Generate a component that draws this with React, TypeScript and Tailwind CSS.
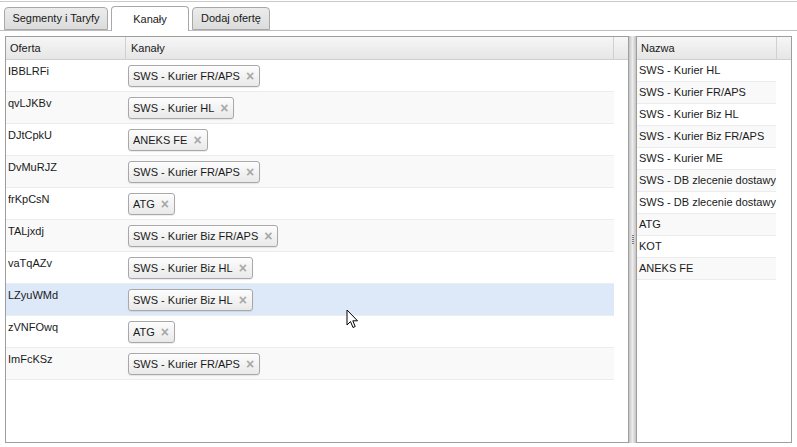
import React from 'react'

const offers = [
  { name: 'IBBLRFi', tag: 'SWS - Kurier FR/APS' },
  { name: 'qvLJKBv', tag: 'SWS - Kurier HL' },
  { name: 'DJtCpkU', tag: 'ANEKS FE' },
  { name: 'DvMuRJZ', tag: 'SWS - Kurier FR/APS' },
  { name: 'frKpCsN', tag: 'ATG' },
  { name: 'TALjxdj', tag: 'SWS - Kurier Biz FR/APS' },
  { name: 'vaTqAZv', tag: 'SWS - Kurier Biz HL' },
  { name: 'LZyuWMd', tag: 'SWS - Kurier Biz HL' },
  { name: 'zVNFOwq', tag: 'ATG' },
  { name: 'ImFcKSz', tag: 'SWS - Kurier FR/APS' },
]

const channels = [
  'SWS - Kurier HL',
  'SWS - Kurier FR/APS',
  'SWS - Kurier Biz HL',
  'SWS - Kurier Biz FR/APS',
  'SWS - Kurier ME',
  'SWS - DB zlecenie dostawy',
  'SWS - DB zlecenie dostawy',
  'ATG',
  'KOT',
  'ANEKS FE',
]

function Tab({ label, active, width }: { label: string; active?: boolean; width: string }) {
  return (
    <div
      className={
        'flex items-center justify-center rounded-t-[4px] border border-[#a8a8a8] ' +
        width +
        (active
          ? ' h-[25px] -mb-px border-b-0 bg-white'
          : ' h-[23px] bg-gradient-to-b from-[#ececec] to-[#dcdcdc]')
      }
    >
      {label}
    </div>
  )
}

function Tag({ label }: { label: string }) {
  return (
    <div className="mt-[5px] inline-flex h-[22px] items-center gap-[6px] rounded-[3px] border border-[#a8a8a8] bg-gradient-to-b from-[#fdfdfd] to-[#e9e9e9] pl-[4px] pr-[5px] shadow-[0_1px_1px_rgba(0,0,0,0.08)]">
      <span>{label}</span>
      <span className="text-[14px] font-bold leading-none text-[#a8a8a8]">×</span>
    </div>
  )
}

export default function App() {
  return (
    <div className="relative h-[447px] w-[797px] overflow-hidden bg-white font-['Liberation_Sans',Arial,sans-serif] text-[11px] text-[#1a1a1a]">
      {/* top line */}
      <div className="mt-px h-px bg-[#c9c9c9]" />

      {/* tabs */}
      <div className="flex h-[29px] items-end gap-[3px] border-b border-[#bdbdbd] pl-[4px]">
        <Tab label="Segmenty i Taryfy" width="w-[104px]" />
        <Tab label="Kanały" width="w-[78px]" active />
        <Tab label="Dodaj ofertę" width="w-[78px]" />
      </div>

      {/* content */}
      <div className="flex h-[412px] pl-[5px] pt-[5px]">
        {/* left grid */}
        <div className="flex w-[624px] flex-col border border-[#9e9e9e]">
          <div className="flex h-[23px] border-b border-[#d0d0d0] bg-gradient-to-b from-[#f6f6f6] to-[#e6e6e6]">
            <div className="flex w-[120px] items-center border-r border-[#d0d0d0] pl-[4px]">Oferta</div>
            <div className="flex flex-1 items-center border-r border-[#d0d0d0] pl-[5px]">Kanały</div>
            <div className="w-[14px]" />
          </div>
          <div className="flex flex-col">
            {offers.map((o, i) => (
              <div
                key={i}
                className={
                  'flex h-[32px] w-[608px] border-b border-[#ececec] ' +
                  (i === 7 ? 'bg-[#dde9f9]' : i % 2 === 1 ? 'bg-[#f9f9f9]' : 'bg-white')
                }
              >
                <div className="w-[120px] pl-[2px] pt-[3px]">{o.name}</div>
                <div className="flex-1 pl-[2px]">
                  <Tag label={o.tag} />
                </div>
              </div>
            ))}
          </div>
        </div>

        {/* splitter */}
        <div className="flex w-[7px] items-center justify-center bg-gradient-to-r from-[#c4c4c4] via-[#ececec] to-[#c4c4c4]">
          <div className="flex flex-col gap-[1px]">
            {[0, 1, 2, 3, 4].map((d) => (
              <div key={d} className="h-[1px] w-[2px] bg-[#7a7a7a]" />
            ))}
          </div>
        </div>

        {/* right grid */}
        <div className="flex w-[156px] flex-col border border-[#9e9e9e]">
          <div className="flex h-[23px] border-b border-[#d0d0d0] bg-gradient-to-b from-[#f6f6f6] to-[#e6e6e6]">
            <div className="flex flex-1 items-center border-r border-[#d0d0d0] pl-[4px]">Nazwa</div>
            <div className="w-[14px]" />
          </div>
          {channels.map((c, i) => (
            <div
              key={i}
              className={
                'flex h-[22px] w-[139px] items-center overflow-hidden whitespace-nowrap border-b border-[#ececec] pl-[2px] ' +
                (i % 2 === 1 ? 'bg-[#f9f9f9]' : 'bg-white')
              }
            >
              {c}
            </div>
          ))}
        </div>
      </div>

      {/* mouse cursor */}
      <svg className="absolute left-[346px] top-[309px]" width="13" height="20" viewBox="0 0 13 20">
        <path
          d="M1 1 L1 16 L4.5 12.5 L7 18.5 L9.2 17.5 L6.8 11.8 L11.5 11.8 Z"
          fill="#fff"
          stroke="#000"
          strokeWidth="1"
          strokeLinejoin="round"
        />
      </svg>
    </div>
  )
}
